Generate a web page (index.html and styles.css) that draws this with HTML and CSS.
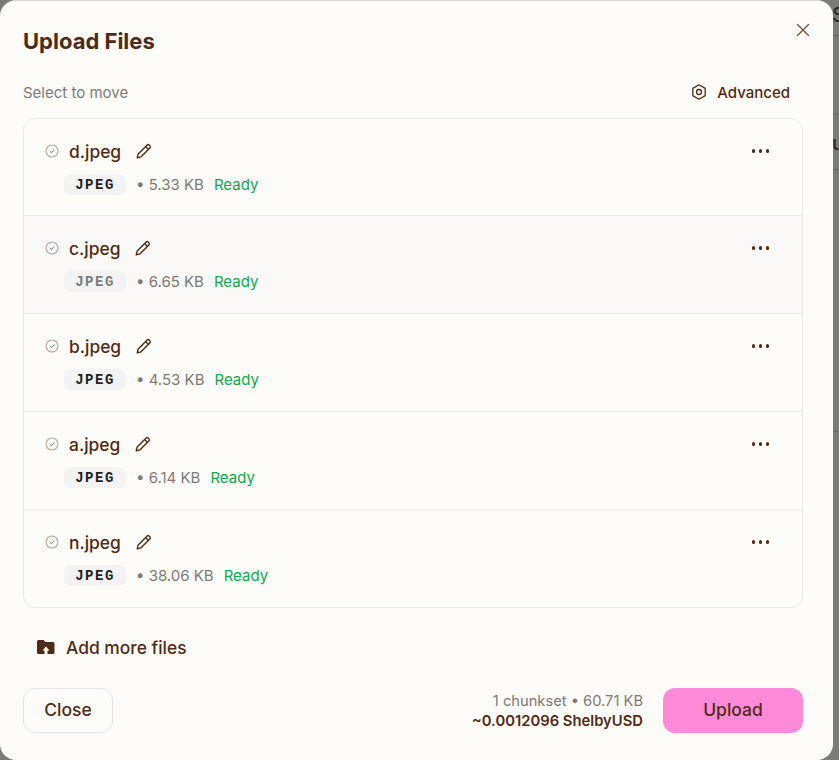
FILE: index.html
```html
<!DOCTYPE html>
<html lang="en">
<head>
    <meta charset="UTF-8">
    <title>Upload Files</title>
    <link rel="stylesheet" href="styles.css">
</head>
<body>
    <div class="page-behind">
        <span class="behind-s">S</span>
        <span class="behind-n">u</span>
        <div class="behind-line line-1"></div>
        <div class="behind-line line-2"></div>
        <div class="behind-line line-3"></div>
        <div class="behind-line line-4"></div>
    </div>

    <div class="modal">
        <button class="close-x" aria-label="Close">
            <svg width="14" height="14" viewBox="0 0 14 14" fill="none" stroke="currentColor" stroke-width="1.4" stroke-linecap="round"><path d="M1.5 1.5l11 11M12.5 1.5l-11 11"/></svg>
        </button>
        <h1>Upload Files</h1>

        <div class="toolbar">
            <span class="select-hint">Select to move</span>
            <span class="advanced">
                <svg width="18" height="18" viewBox="0 0 18 18" fill="none" stroke="currentColor" stroke-width="1.3" stroke-linejoin="round"><path d="M9 1.8l6.2 3.6v7.2L9 16.2l-6.2-3.6V5.4z"/><circle cx="9" cy="9" r="2.5"/></svg>
                Advanced
            </span>
        </div>

        <div class="file-list">
            <div class="file-row">
                <div class="file-top">
                    <svg class="check" width="14" height="14" viewBox="0 0 14 14" fill="none"><circle cx="7" cy="7" r="6" stroke="#b8a79c" stroke-width="1.1"/><path d="M4.8 7.2l1.6 1.500 2.900-3.200" stroke="#8a7a70" stroke-width="1"/></svg>
                    <span class="file-name">d.jpeg</span>
                    <svg class="pencil" width="18" height="18" viewBox="0 0 16 16" fill="none" stroke="currentColor" stroke-width="1.2" stroke-linejoin="round"><path d="M2 14l.8-3.400L10.600 2.800a1.500 1.500 0 0 1 2.100 0l.5.5a1.500 1.500 0 0 1 0 2.100L5.400 13.200z"/><path d="M9.400 4l2.600 2.600"/></svg>
                    <span class="more"><i></i><i></i><i></i></span>
                </div>
                <div class="file-meta">
                    <span class="tag">JPEG</span>
                    <span class="size">• 5.33 KB</span>
                    <span class="ready">Ready</span>
                </div>
            </div>
            <div class="file-row hovered">
                <div class="file-top">
                    <svg class="check" width="14" height="14" viewBox="0 0 14 14" fill="none"><circle cx="7" cy="7" r="6" stroke="#b8a79c" stroke-width="1.1"/><path d="M4.8 7.2l1.6 1.500 2.900-3.200" stroke="#8a7a70" stroke-width="1"/></svg>
                    <span class="file-name">c.jpeg</span>
                    <svg class="pencil" width="18" height="18" viewBox="0 0 16 16" fill="none" stroke="currentColor" stroke-width="1.2" stroke-linejoin="round"><path d="M2 14l.8-3.400L10.600 2.800a1.500 1.500 0 0 1 2.100 0l.5.5a1.500 1.500 0 0 1 0 2.100L5.400 13.200z"/><path d="M9.400 4l2.600 2.600"/></svg>
                    <span class="more"><i></i><i></i><i></i></span>
                </div>
                <div class="file-meta">
                    <span class="tag">JPEG</span>
                    <span class="size">• 6.65 KB</span>
                    <span class="ready">Ready</span>
                </div>
            </div>
            <div class="file-row">
                <div class="file-top">
                    <svg class="check" width="14" height="14" viewBox="0 0 14 14" fill="none"><circle cx="7" cy="7" r="6" stroke="#b8a79c" stroke-width="1.1"/><path d="M4.8 7.2l1.6 1.500 2.900-3.200" stroke="#8a7a70" stroke-width="1"/></svg>
                    <span class="file-name">b.jpeg</span>
                    <svg class="pencil" width="18" height="18" viewBox="0 0 16 16" fill="none" stroke="currentColor" stroke-width="1.2" stroke-linejoin="round"><path d="M2 14l.8-3.400L10.600 2.800a1.500 1.500 0 0 1 2.100 0l.5.5a1.500 1.500 0 0 1 0 2.100L5.400 13.200z"/><path d="M9.400 4l2.600 2.600"/></svg>
                    <span class="more"><i></i><i></i><i></i></span>
                </div>
                <div class="file-meta">
                    <span class="tag">JPEG</span>
                    <span class="size">• 4.53 KB</span>
                    <span class="ready">Ready</span>
                </div>
            </div>
            <div class="file-row">
                <div class="file-top">
                    <svg class="check" width="14" height="14" viewBox="0 0 14 14" fill="none"><circle cx="7" cy="7" r="6" stroke="#b8a79c" stroke-width="1.1"/><path d="M4.8 7.2l1.6 1.500 2.900-3.200" stroke="#8a7a70" stroke-width="1"/></svg>
                    <span class="file-name">a.jpeg</span>
                    <svg class="pencil" width="18" height="18" viewBox="0 0 16 16" fill="none" stroke="currentColor" stroke-width="1.2" stroke-linejoin="round"><path d="M2 14l.8-3.400L10.600 2.800a1.500 1.500 0 0 1 2.100 0l.5.5a1.500 1.500 0 0 1 0 2.100L5.400 13.200z"/><path d="M9.400 4l2.600 2.600"/></svg>
                    <span class="more"><i></i><i></i><i></i></span>
                </div>
                <div class="file-meta">
                    <span class="tag">JPEG</span>
                    <span class="size">• 6.14 KB</span>
                    <span class="ready">Ready</span>
                </div>
            </div>
            <div class="file-row">
                <div class="file-top">
                    <svg class="check" width="14" height="14" viewBox="0 0 14 14" fill="none"><circle cx="7" cy="7" r="6" stroke="#b8a79c" stroke-width="1.1"/><path d="M4.8 7.2l1.6 1.500 2.900-3.200" stroke="#8a7a70" stroke-width="1"/></svg>
                    <span class="file-name">n.jpeg</span>
                    <svg class="pencil" width="18" height="18" viewBox="0 0 16 16" fill="none" stroke="currentColor" stroke-width="1.2" stroke-linejoin="round"><path d="M2 14l.8-3.400L10.600 2.800a1.500 1.500 0 0 1 2.100 0l.5.5a1.500 1.500 0 0 1 0 2.100L5.400 13.200z"/><path d="M9.400 4l2.600 2.600"/></svg>
                    <span class="more"><i></i><i></i><i></i></span>
                </div>
                <div class="file-meta">
                    <span class="tag">JPEG</span>
                    <span class="size">• 38.06 KB</span>
                    <span class="ready">Ready</span>
                </div>
            </div>
        </div>

        <div class="add-more">
            <svg width="18" height="16" viewBox="0 0 18 16"><path fill="#4f2a14" fill-rule="evenodd" d="M1.500 1h5l2 2h7.500a1.500 1.500 0 0 1 1.500 1.500v9a1.500 1.500 0 0 1-1.500 1.500H10.500v-3.600h2L9 7.600l-3.500 3.800h2V15H1.500A1.500 1.500 0 0 1 0 13.500v-11A1.500 1.500 0 0 1 1.500 1z"/></svg>
            Add more files
        </div>

        <div class="footer">
            <button class="btn-close">Close</button>
            <div class="summary">
                <div class="chunks">1 chunkset • 60.71 KB</div>
                <div class="cost">~0.0012096 ShelbyUSD</div>
            </div>
            <button class="btn-upload">Upload</button>
        </div>
    </div>
</body>
</html>
```

FILE: styles.css
```css
* {
    box-sizing: border-box;
}

body {
    margin: 0;
    height: 760px;
    overflow: hidden;
    position: relative;
    background: #7a7a76;
    font-family: 'Inter', sans-serif;
    color: #4f2a14;
}

.page-behind span {
    position: absolute;
    left: 832px;
    color: #2e2a26;
    font-size: 20px;
    font-weight: 500;
}

.behind-s {
    top: 3px;
}

.behind-n {
    top: 131px;
}

.behind-line {
    position: absolute;
    left: 833px;
    width: 6px;
    height: 1px;
    background: #6b6b68;
}

.line-1 {
    top: 35px;
}

.line-2 {
    top: 114px;
}

.line-3 {
    top: 169px;
}

.line-4 {
    top: 431px;
}

.modal {
    position: relative;
    width: 833px;
    height: 760px;
    padding: 1px 30px 0 23px;
    background: #fdfcf8;
    border-radius: 16px;
    border-top: 1px solid #d9d8d4;
}

.close-x {
    position: absolute;
    top: 22px;
    right: 23px;
    padding: 0;
    border: none;
    background: none;
    color: #6f5444;
    display: flex;
}

h1 {
    margin: 25px 0 0;
    font-size: 22px;
    line-height: 28px;
    font-weight: 700;
}

.toolbar {
    display: flex;
    justify-content: space-between;
    align-items: center;
    height: 24px;
    margin-top: 25px;
}

.select-hint {
    color: #7d7a76;
    font-size: 15px;
}

.advanced {
    display: flex;
    align-items: center;
    gap: 9px;
    margin-right: 13px;
    font-size: 15px;
    font-weight: 450;
}

.file-list {
    margin-top: 14px;
    border: 1px solid #ebeae6;
    border-radius: 12px;
    overflow: hidden;
}

.file-row {
    height: 98px;
    padding: 20px 33px 0 21px;
    border-bottom: 1px solid #ebeae6;
}

.file-row:first-child,
.file-row:last-child {
    height: 97px;
}

.file-row:last-child {
    border-bottom: none;
}

.file-row.hovered {
    background: #faf9f7;
}

.file-row.hovered .tag {
    color: #7c7c7c;
}

.file-top {
    display: flex;
    align-items: center;
    height: 24px;
}

.check {
    flex: none;
}

.file-name {
    margin-left: 10px;
    font-size: 17.4px;
    font-weight: 450;
}

.pencil {
    margin-left: 14px;
}

.more {
    margin-left: auto;
    display: flex;
    gap: 3.5px;
}

.more i {
    width: 3.5px;
    height: 3.5px;
    border-radius: 50%;
    background: #4f2a14;
}

.file-meta {
    display: flex;
    align-items: center;
    height: 22px;
    margin-top: 10px;
    padding-left: 19px;
    font-size: 15px;
}

.tag {
    width: 62px;
    height: 21px;
    line-height: 22px;
    margin-right: 10px;
    text-align: center;
    background: #f3f3f3;
    border-radius: 7px;
    color: #1f1f1f;
    font-family: 'Liberation Mono', monospace;
    font-size: 14px;
    font-weight: 700;
    letter-spacing: 1.5px;
}

.size {
    color: #7d7a76;
}

.ready {
    margin-left: 10px;
    color: #0fa84e;
}

.add-more {
    display: flex;
    align-items: center;
    gap: 11px;
    height: 24px;
    margin-top: 27px;
    padding-left: 14px;
    font-size: 17.4px;
    font-weight: 450;
}

.footer {
    display: flex;
    align-items: center;
    margin-top: 29px;
}

.btn-close,
.btn-upload {
    height: 45px;
    padding-bottom: 3px;
    border-radius: 12px;
    color: #4f2a14;
    font-family: inherit;
    font-size: 17.5px;
    font-weight: 450;
}

.btn-close {
    width: 90px;
    background: transparent;
    border: 1px solid #e4e4e4;
}

.summary {
    margin-left: auto;
    text-align: right;
    font-size: 14.7px;
    line-height: 20px;
}

.chunks {
    color: #7d7a76;
}

.cost {
    font-weight: 600;
    font-size: 14.8px;
}

.btn-upload {
    width: 140px;
    margin-left: 20px;
    background: #ff8ada;
    border: none;
}
```
